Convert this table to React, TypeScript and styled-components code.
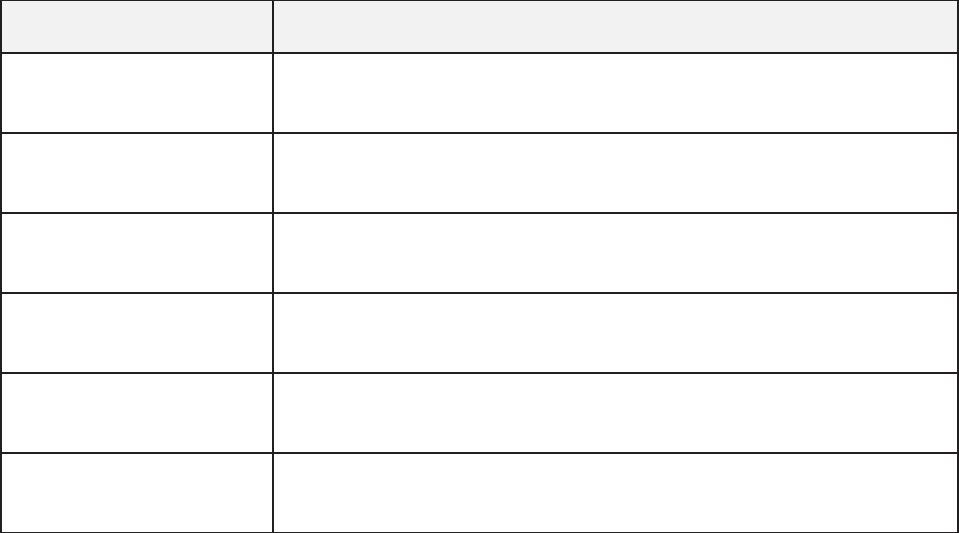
import React from "react";
import styled, { createGlobalStyle } from "styled-components";

const GlobalStyle = createGlobalStyle`
  html, body {
    margin: 0;
    padding: 0;
    background: #ffffff;
    font-family: "Liberation Sans", Arial, sans-serif;
  }
`;

const Table = styled.table`
  width: 959px;
  table-layout: fixed;
  border-collapse: collapse;
  margin-top: -1px;
`;

const HeadCell = styled.th<{ $width?: number }>`
  width: ${(props) => (props.$width ? `${props.$width}px` : "auto")};
  height: 51px;
  padding: 0 12px;
  background: #f2f2f2;
  border: 2px solid #231f20;
  text-align: left;
  font-size: 14px;
  font-weight: 700;
  color: #231f20;
`;

const Cell = styled.td`
  height: 78px;
  padding: 0 12px;
  border: 2px solid #231f20;
  font-size: 14px;
  color: #231f20;
`;

const rows = [0, 1, 2, 3, 4, 5];

const App = () => {
  return (
    <>
      <GlobalStyle />
      <Table>
        <thead>
          <tr>
            <HeadCell $width={246}></HeadCell>
            <HeadCell></HeadCell>
          </tr>
        </thead>
        <tbody>
          {rows.map((r) => (
            <tr key={r}>
              <Cell></Cell>
              <Cell></Cell>
            </tr>
          ))}
        </tbody>
      </Table>
    </>
  );
};

export default App;
